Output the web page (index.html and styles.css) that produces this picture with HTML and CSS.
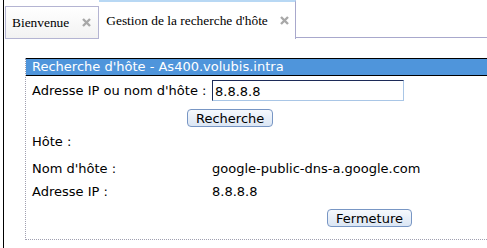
FILE: index.html
```html
<!DOCTYPE html>
<html lang="fr">
<head>
  <meta charset="UTF-8" />
  <title>Gestion de la recherche d'hôte</title>
  <link rel="stylesheet" href="styles.css">
</head>
<body>
  <div class="page">
    <div class="tabs">
      <div class="tab">
        <span class="tab-label">Bienvenue</span>
        <svg class="tab-close" width="9" height="9" viewBox="0 0 9 9"><path d="M1 1L8 8M8 1L1 8" /></svg>
      </div>
      <div class="tab active">
        <span class="tab-label">Gestion de la recherche d'hôte</span>
        <svg class="tab-close" width="9" height="9" viewBox="0 0 9 9"><path d="M1 1L8 8M8 1L1 8" /></svg>
      </div>
      <div class="tab-rest"></div>
    </div>
    <div class="content">
      <div class="panel">
        <div class="panel-title">Recherche d'hôte - As400.volubis.intra</div>
        <div class="panel-body">
          <div class="row row-input">
            <label class="label" for="host">Adresse IP ou nom d'hôte :</label>
            <input class="field" id="host" type="text" value="8.8.8.8" />
          </div>
          <div class="actions search">
            <button class="btn">Recherche</button>
          </div>
          <div class="row row-head">
            <span class="label">Hôte :</span>
          </div>
          <div class="row row-name">
            <span class="label">Nom d'hôte :</span>
            <span class="value">google-public-dns-a.google.com</span>
          </div>
          <div class="row row-ip">
            <span class="label">Adresse IP :</span>
            <span class="value">8.8.8.8</span>
          </div>
          <div class="actions close">
            <button class="btn">Fermeture</button>
          </div>
        </div>
      </div>
    </div>
  </div>
</body>
</html>
```

FILE: styles.css
```css
body {
  margin: 0;
  background: #fff;
  font-family: 'DejaVu Sans', Verdana, sans-serif;
  font-size: 13px;
  color: #000;
  overflow: hidden;
}
.page {
  margin-left: 3px;
  border-left: 1px solid #000;
  height: 248px;
  padding-left: 1px;
}
/* tab strip */
.tabs {
  display: flex;
  align-items: flex-end;
  height: 39px;
}
.tab {
  display: flex;
  align-items: center;
  box-sizing: border-box;
  height: 33px;
  padding: 0 7px 0 6px;
  border: 1px solid #b4b4d2;
  background: linear-gradient(#ffffff, #f2f2f2);
  font-family: 'Liberation Serif', 'Times New Roman', serif;
  font-size: 13.4px;
}
.tab .tab-label {
  margin-right: 13px;
}
.tab.active {
  height: 39px;
  padding: 0 6px 0 7px;
  border: none;
  border-top: 2px solid #b8d8f4;
  border-right: 1px solid #a8a8cc;
  background: #fff;
}
.tab.active .tab-label {
  margin-right: 12px;
}
.tab-close path {
  stroke: #a8a8a8;
  stroke-width: 2.4;
}
.tab-rest {
  flex: 1;
  align-self: stretch;
  border-bottom: 1px solid #a8a8cc;
  margin-bottom: 1px;
}
/* panel */
.content {
  padding: 19px 0 0 20px;
}
.panel {
  border-left: 1px dotted #a0a0b0;
  border-bottom: 1px dotted #a0a0b0;
}
.panel-title {
  height: 16px;
  line-height: 16px;
  padding-left: 6px;
  border-top: 1px solid #000;
  border-bottom: 1px solid #000;
  background: #4f95db;
  color: #fff;
}
.panel-body {
  padding: 0 0 12px 6px;
}
.row {
  display: grid;
  grid-template-columns: 180px 1fr;
  align-items: center;
  line-height: 16px;
}
.row-input {
  margin-top: 4px;
}
.row-head {
  margin-top: 7px;
}
.row-name {
  margin-top: 11px;
}
.row-ip {
  margin-top: 7px;
}
.field {
  box-sizing: border-box;
  width: 192px;
  height: 21px;
  margin: 0;
  padding: 1px 2px 0;
  border: 1px solid #a9c6e6;
  border-top-color: #1c2a58;
  border-left-color: #1c2a58;
  font-family: 'DejaVu Sans', Verdana, sans-serif;
  font-size: 13px;
  color: #000;
}
.actions.search {
  margin: 8px 0 0 155px;
}
.actions.close {
  margin: 9px 0 0 295px;
}
.btn {
  box-sizing: border-box;
  height: 18px;
  padding: 0 8px;
  border: 1px solid #7896c4;
  border-radius: 4px;
  background: linear-gradient(#f6f9fd, #dbe6f4);
  font-family: 'DejaVu Sans', Verdana, sans-serif;
  font-size: 13px;
  line-height: 15px;
  color: #000;
}
```
